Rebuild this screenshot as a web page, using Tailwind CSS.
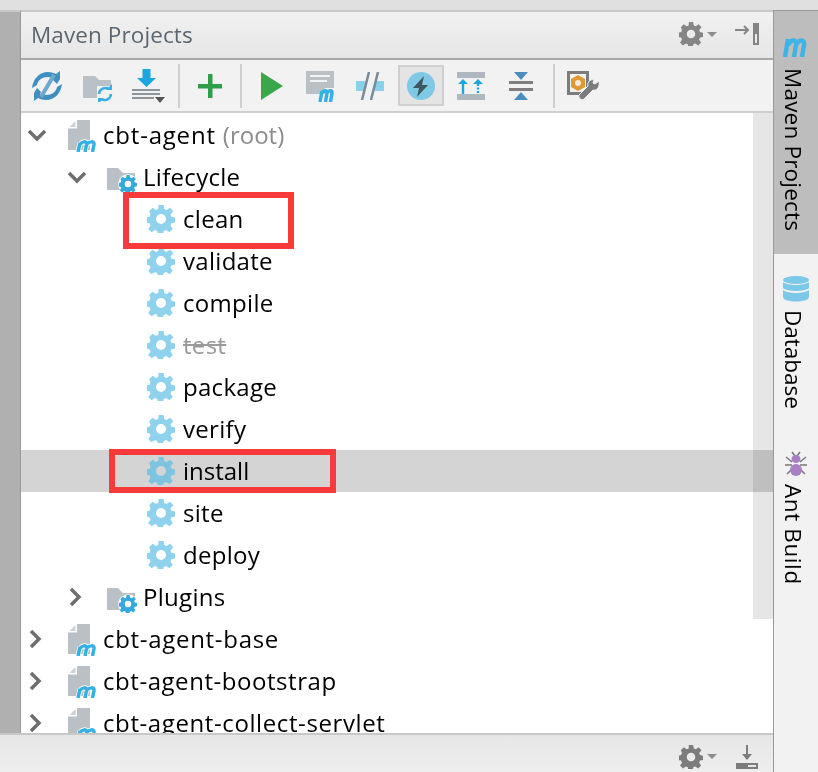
<!DOCTYPE html>
<html lang="en">
<head>
  <meta charset="UTF-8">
  <title>Maven Projects</title>
  <script src="https://cdn.jsdelivr.net/npm/@tailwindcss/browser@4"></script>
</head>
<body class="w-[818px] h-[772px] overflow-hidden bg-[#f2f2f2] font-['Open_Sans','Noto_Sans',sans-serif] text-[24px] text-black">
  <svg class="hidden">
    <defs>
      <symbol id="gear" viewBox="0 0 28 28">
        <path fill="currentColor" fill-rule="evenodd" d="M11.5 0h5l.7 4 2.4 1 3.3-2.3 3.4 3.4L23.5 9.400l1 2.400 3.500.7v5l-3.500.7-1 2.400 2.300 3.300-3.400 3.400-3.300-2.300-2.400 1-.7 3.500h-5l-.7-3.500-2.400-1-3.300 2.300-3.400-3.400 2.300-3.300-1-2.400-3.500-.7v-5l3.500-.7 1-2.400L2.200 6.100l3.400-3.400L8.900 5l2.400-1zM14 9a5 5 0 1 0 0 10 5 5 0 0 0 0-10z"/>
      </symbol>
      <symbol id="file" viewBox="0 0 30 32">
        <path fill="#b9c0c6" d="M9 0h13v30H0V8.500h9z"/>
        <path fill="#ccd1d5" d="M1.500 7l6-6v6z"/>
        <path fill="none" stroke="#fff" stroke-width="5" d="M10 32l2-9M12 24.500c2-3 7-4 6.500 0L17 32M18.500 24.500c2.500-3 8-4 7.500 0L24.500 32"/>
        <path fill="none" stroke="#35b0e4" stroke-width="3.500" d="M10 32l2-9M12 24.500c2-3 7-4 6.500 0L17 32M18.500 24.500c2.500-3 8-4 7.500 0L24.500 32"/>
      </symbol>
      <symbol id="folder" viewBox="0 0 30 25">
        <path fill="#b9c0c6" d="M0 0h11l5 5h12v17H0z"/>
        <circle cx="21" cy="16" r="9.800" fill="#fff"/>
      </symbol>
    </defs>
  </svg>

  <div class="h-[10px] bg-[#e0e0e0]"></div>
  <div class="flex h-[762px]">
    <div class="w-[773px] shrink-0 flex flex-col">
      <div class="flex h-[723px] shrink-0">
        <!-- left gutter -->
        <div class="w-[21px] shrink-0 bg-[#b0b0b0] border-r border-[#999] border-t-2 border-t-[#c8c8c8]"></div>

        <!-- maven panel -->
        <div class="relative w-[752px] shrink-0 flex flex-col">
          <div class="h-[50px] shrink-0 flex items-center justify-between pl-[10px] pr-[14px] border-t-2 border-[#c8c8c8] border-b-2 border-b-[#a8a8a8] bg-gradient-to-b from-[#f1f1f1] to-[#e6e6e6]">
            <span class="text-[22.5px] text-[#5c6670] leading-none tracking-[0.1px]">Maven Projects</span>
            <div class="flex items-center gap-[18px] text-[#858585] -mt-[2px]">
              <div class="flex items-center gap-[4px]">
                <svg class="w-[24px] h-[24px]"><use href="#gear"/></svg>
                <span class="w-0 h-0 border-x-[5px] border-x-transparent border-t-[5px] border-t-[#8c8c8c]"></span>
              </div>
              <svg class="w-[24px] h-[22px]" viewBox="0 0 24 22"><path fill="none" stroke="#858585" stroke-width="2" d="M0 7h13M9 3l4 4-4 4"/><path fill="#858585" fill-rule="evenodd" d="M18 0h6v22h-6zM20 11v9h2v-9z"/></svg>
            </div>
          </div>

          <!-- toolbar -->
          <div class="h-[53px] shrink-0 flex items-center pl-[5px] bg-[#f2f2f2] border-b-2 border-[#cfcfcf]">
            <div class="w-[42px] h-[42px] flex items-center justify-center">
              <svg class="w-[30px] h-[30px]" viewBox="0 0 30 30"><path fill="#3f8fc0" d="M28 0v8l-3 5-4-4 1-2-6-1c-6 0-10 3-11 8l-5 3C1 8 7 1 16 1c3 0 6 1 8 2zM2 30v-8l3-5 4 4-1 2 6 1c6 0 10-3 11-8l5-3c-1 9-7 16-16 16-3 0-6-1-8-2z"/><path stroke="#6fa8cc" stroke-width="4" d="M9 26L22 4"/></svg>
            </div>
            <div class="w-[60px] h-[42px] flex items-center justify-center">
              <svg class="w-[32px] h-[32px]" viewBox="0 0 32 32"><path fill="#b9c0c6" d="M1 6h12l4 4h12v6H15v12H1z"/><path fill="none" stroke="#35b0e4" stroke-width="2.500" d="M17 24a6.500 6.500 0 0 1 10-5M29 24a6.500 6.500 0 0 1-10 5"/><path fill="#35b0e4" d="M24 20h6v-6zM22 28h-6v6z"/></svg>
            </div>
            <div class="w-[42px] h-[42px] flex items-center justify-center">
              <svg class="w-[34px] h-[34px]" viewBox="0 0 34 34"><path fill="#1ba6e0" d="M10.500 0h8v9H24l-9.500 9L5 9h5.500z"/><path fill="#8c959c" d="M0 20h28v2H0zM0 24h28v2H0zM0 28h22v2H0z"/><path fill="#555" d="M23 28h10l-5 6z"/></svg>
            </div>
            <div class="w-[2px] h-[44px] ml-[8px] bg-[#cfcfcf]"></div>
            <div class="w-[60px] h-[42px] flex items-center justify-center">
              <svg class="w-[24px] h-[24px]" viewBox="0 0 24 24"><path fill="#2f9e4a" d="M10 0h4.500v10H24v4.500h-9.500V24H10v-9.500H0V10h10z"/></svg>
            </div>
            <div class="w-[2px] h-[44px] bg-[#cfcfcf]"></div>
            <div class="w-[60px] h-[42px] flex items-center justify-center">
              <svg class="w-[22px] h-[28px]" viewBox="0 0 22 28"><path fill="#38a84b" d="M0 0l22 14L0 28z"/></svg>
            </div>
            <div class="w-[40px] h-[42px] flex items-center justify-center">
              <svg class="w-[32px] h-[32px]" viewBox="0 0 32 32"><path fill="#b9c0c6" d="M0 1h28v17h-9v6H0z"/><path fill="#f2f2f2" d="M4 5h20v2H4zM4 10h17v2H4z"/><path fill="none" stroke="#35b0e4" stroke-width="3.500" d="M14 32l2-11M16 23c2-3 5-3 5 0l-1.500 9M21 23c2-3 5-3 5 0l-1.500 9"/></svg>
            </div>
            <div class="w-[56px] h-[42px] flex items-center justify-center">
              <svg class="w-[28px] h-[28px]" viewBox="0 0 28 28"><path fill="#89d0ea" d="M0 9h9v10H0zM19 9h9v10h-9z"/><path stroke="#7a8b99" stroke-width="2.500" d="M6 28l7-28M15 28l7-28"/></svg>
            </div>
            <div class="w-[46px] h-[41px] flex items-center justify-center bg-[#e4e4e4] border-2 border-[#cfcfcf] rounded-[1px]">
              <svg class="w-[28px] h-[28px]" viewBox="0 0 28 28"><circle cx="14" cy="14" r="14" fill="#7fc8e6"/><path fill="#3f5560" d="M17 4L6 16h6l-2 9 11-12h-6z"/></svg>
            </div>
            <div class="w-[54px] h-[42px] flex items-center justify-center">
              <svg class="w-[28px] h-[28px]" viewBox="0 0 28 28"><path fill="#aeb8bf" d="M0 0h28v6H0zM0 22h28v6H0z"/><path fill="#1ba6e0" d="M6 7l5 5H7.200v10H4.800V12H1zM21 7l5 5h-3.800v2h-2.400v-2H16zM19.800 15.500h2.400v2h-2.400zM19.800 19h2.400v2h-2.400z"/></svg>
            </div>
            <div class="w-[46px] h-[42px] flex items-center justify-center">
              <svg class="w-[24px] h-[28px]" viewBox="0 0 24 28"><path fill="#4c8dbf" d="M5 0h14l-7 8zM5 28h14l-7-8z"/><path fill="#7e7e7e" d="M0 9h24v3H0zM0 16h24v3H0z"/></svg>
            </div>
            <div class="w-[2px] h-[44px] ml-[9px] bg-[#cfcfcf]"></div>
            <div class="w-[56px] h-[42px] flex items-center justify-center">
              <svg class="w-[33px] h-[30px]" viewBox="0 0 33 30"><path fill="#7c7c7c" d="M0 0h22v24H0z"/><path fill="#f2f2f2" d="M3 3h16v18H3z"/><path fill="#e09a33" d="M11 4l7 4v8l-7 4-7-4V8z"/><circle cx="11" cy="12" r="3" fill="#f5ead8"/><path fill="#7c7c7c" stroke="#f2f2f2" d="M32 10l-4 3-2-1 1-3c-4-1-7 2-6 6l-9 9c-1 3 3 6 5 4l9-9c4 1 7-3 6-9z"/></svg>
            </div>
          </div>

          <!-- tree -->
          <div class="relative flex-1 bg-white overflow-hidden">
            <div class="absolute right-0 top-0 w-[20px] h-[506px] bg-[#e6e6e6] z-10 mix-blend-multiply"></div>
            <ul class="leading-[42px] pt-[1px] tracking-[0.3px]">
              <li class="h-[42px] flex items-center"><svg class="ml-[6px] w-[20px] h-[14px]" viewBox="0 0 20 14"><path fill="none" stroke="#6e6e6e" stroke-width="3.500" d="M2 3l8 8 8-8"/></svg><svg class="ml-[21px] w-[30px] h-[32px] mt-[2px]"><use href="#file"/></svg><span class="ml-[5px] -mt-[1px] tracking-[0.8px]">cbt-agent <span class="text-[#8c8c8c] tracking-normal">(root)</span></span></li>
              <li class="h-[42px] flex items-center"><svg class="ml-[46px] w-[20px] h-[14px]" viewBox="0 0 20 14"><path fill="none" stroke="#6e6e6e" stroke-width="3.500" d="M2 3l8 8 8-8"/></svg><div class="relative ml-[20px] w-[30px] h-[30px] mt-[12px]"><svg class="w-[30px] h-[25px]"><use href="#folder"/></svg><svg class="absolute left-[12px] top-[7px] w-[18px] h-[18px] text-[#35a9dd]"><use href="#gear"/></svg></div><span class="ml-[6px] -mt-[1px]">Lifecycle</span></li>
              <li class="h-[42px] flex items-center pl-[126px]"><svg class="w-[28px] h-[28px] text-[#8ed2ee]"><use href="#gear"/></svg><span class="ml-[8px] -mt-[1px]">clean</span></li>
              <li class="h-[42px] flex items-center pl-[126px]"><svg class="w-[28px] h-[28px] text-[#8ed2ee]"><use href="#gear"/></svg><span class="ml-[8px] -mt-[1px]">validate</span></li>
              <li class="h-[42px] flex items-center pl-[126px]"><svg class="w-[28px] h-[28px] text-[#8ed2ee]"><use href="#gear"/></svg><span class="ml-[8px] -mt-[1px]">compile</span></li>
              <li class="h-[42px] flex items-center pl-[126px]"><svg class="w-[28px] h-[28px] text-[#8ed2ee]"><use href="#gear"/></svg><span class="ml-[8px] -mt-[1px] text-[#9a9a9a] line-through">test</span></li>
              <li class="h-[42px] flex items-center pl-[126px]"><svg class="w-[28px] h-[28px] text-[#8ed2ee]"><use href="#gear"/></svg><span class="ml-[8px] -mt-[1px]">package</span></li>
              <li class="h-[42px] flex items-center pl-[126px]"><svg class="w-[28px] h-[28px] text-[#8ed2ee]"><use href="#gear"/></svg><span class="ml-[8px] -mt-[1px]">verify</span></li>
              <li class="h-[42px] flex items-center pl-[126px] bg-[#d4d4d4]"><svg class="w-[28px] h-[28px] text-[#7cc4e0]"><use href="#gear"/></svg><span class="ml-[8px] -mt-[1px] tracking-normal">install</span></li>
              <li class="h-[42px] flex items-center pl-[126px]"><svg class="w-[28px] h-[28px] text-[#8ed2ee]"><use href="#gear"/></svg><span class="ml-[8px] -mt-[1px]">site</span></li>
              <li class="h-[42px] flex items-center pl-[126px]"><svg class="w-[28px] h-[28px] text-[#8ed2ee]"><use href="#gear"/></svg><span class="ml-[8px] -mt-[1px]">deploy</span></li>
              <li class="h-[42px] flex items-center"><svg class="ml-[47px] w-[14px] h-[20px]" viewBox="0 0 14 20"><path fill="none" stroke="#6e6e6e" stroke-width="3.500" d="M3 2l8 8-8 8"/></svg><div class="relative ml-[25px] w-[30px] h-[30px] mt-[12px]"><svg class="w-[30px] h-[25px]"><use href="#folder"/></svg><svg class="absolute left-[12px] top-[7px] w-[18px] h-[18px] text-[#35a9dd]"><use href="#gear"/></svg></div><span class="ml-[6px] -mt-[1px]">Plugins</span></li>
              <li class="h-[42px] flex items-center"><svg class="ml-[7px] w-[14px] h-[20px]" viewBox="0 0 14 20"><path fill="none" stroke="#6e6e6e" stroke-width="3.500" d="M3 2l8 8-8 8"/></svg><svg class="ml-[26px] w-[30px] h-[32px] mt-[2px]"><use href="#file"/></svg><span class="ml-[5px] -mt-[1px] tracking-[0.7px]">cbt-agent-base</span></li>
              <li class="h-[42px] flex items-center"><svg class="ml-[7px] w-[14px] h-[20px]" viewBox="0 0 14 20"><path fill="none" stroke="#6e6e6e" stroke-width="3.500" d="M3 2l8 8-8 8"/></svg><svg class="ml-[26px] w-[30px] h-[32px] mt-[2px]"><use href="#file"/></svg><span class="ml-[5px] -mt-[1px] tracking-[0.55px]">cbt-agent-bootstrap</span></li>
              <li class="h-[42px] flex items-center"><svg class="ml-[7px] w-[14px] h-[20px]" viewBox="0 0 14 20"><path fill="none" stroke="#6e6e6e" stroke-width="3.500" d="M3 2l8 8-8 8"/></svg><svg class="ml-[26px] w-[30px] h-[32px] mt-[2px]"><use href="#file"/></svg><span class="ml-[5px] -mt-[1px] tracking-[0.6px]">cbt-agent-collect-servlet</span></li>
            </ul>
          </div>

          <!-- red highlight boxes -->
          <div class="absolute left-[102px] top-[182px] w-[171px] h-[57px] border-[6px] border-[#f93a3a] z-20"></div>
          <div class="absolute left-[88px] top-[439px] w-[227px] h-[44px] border-[6px] border-[#f93a3a] z-20"></div>
        </div>
      </div>

      <!-- bottom bar -->
      <div class="h-[39px] shrink-0 flex items-center justify-end gap-[19px] pr-[15px] pt-[6px] bg-gradient-to-b from-[#e6e6e6] to-[#eeeeee] border-t-2 border-[#c8c8c8] text-[#7c7c7c]">
        <div class="flex items-center gap-[4px]">
          <svg class="w-[24px] h-[24px]"><use href="#gear"/></svg>
          <span class="w-0 h-0 border-x-[5px] border-x-transparent border-t-[5px] border-t-[#8c8c8c]"></span>
        </div>
        <svg class="w-[22px] h-[24px]" viewBox="0 0 22 24"><path fill="none" stroke="#7c7c7c" stroke-width="2" d="M11 0v14"/><path fill="#7c7c7c" d="M6 9l5 6 5-6zM0 18h22v6H0z"/><path fill="#e8e8e8" d="M12 20h8v2h-8z"/></svg>
      </div>
    </div>

    <!-- right tool stripe -->
    <div class="flex-1 flex flex-col bg-[#f2f2f2] border-l border-[#999]">
      <div class="h-[244px] bg-[#bdbdbd] border-t border-[#999] flex flex-col items-center pt-[26px]">
        <svg class="w-[28px] h-[20px]" viewBox="0 0 28 20"><path fill="none" stroke="#3fb3e4" stroke-width="4.500" d="M3 20L6 2M6 8c3-6 9-6 8 0l-2 12M14 8c3-6 9-6 8 0l-2 12"/></svg>
        <span class="[writing-mode:vertical-rl] mt-[11px] mr-[6px] text-[22.5px] leading-none tracking-[0.2px]">Maven Projects</span>
      </div>
      <div class="flex flex-col items-center pt-[22px]">
        <svg class="w-[26px] h-[26px]" viewBox="0 0 26 26"><ellipse cx="13" cy="4" rx="13" ry="4" fill="#7cc8e8"/><path fill="#7cc8e8" d="M0 6c4 4 22 4 26 0v6c-4 4-22 4-26 0zM0 14c4 4 22 4 26 0v7c0 6-26 6-26 0z"/></svg>
        <span class="[writing-mode:vertical-rl] mt-[8px] mr-[6px] text-[22.5px] leading-none">Database</span>
      </div>
      <div class="flex flex-col items-center pt-[42px]">
        <svg class="w-[22px] h-[26px]" viewBox="0 0 22 26"><path fill="none" stroke="#777" stroke-width="1.500" d="M7 1l3 4M15 1l-3 4M1 6l6 5M21 6l-6 5M0 14h7M22 14h-7M2 23l6-6M20 23l-6-6"/><ellipse cx="11" cy="8" rx="4.500" ry="4" fill="#a97fc4"/><ellipse cx="11" cy="19" rx="6" ry="6" fill="#a97fc4"/></svg>
        <span class="[writing-mode:vertical-rl] mt-[7px] mr-[6px] text-[22.5px] leading-none tracking-[0.6px]">Ant Build</span>
      </div>
    </div>
  </div>
</body>
</html>
